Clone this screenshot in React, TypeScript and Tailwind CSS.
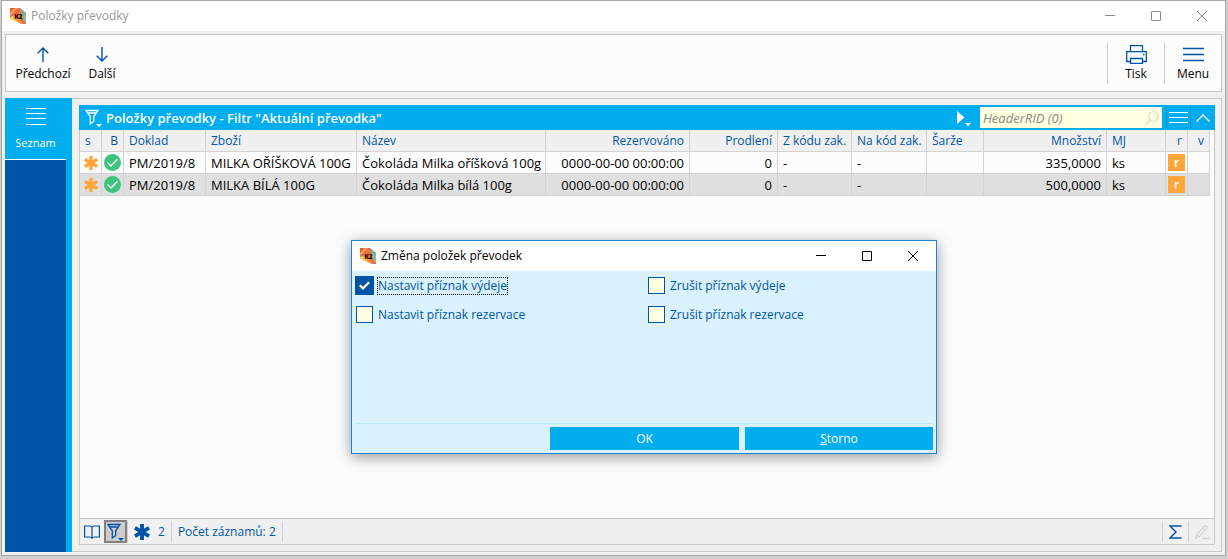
import { useState } from "react"
import type { ReactNode } from "react"
import clsx from "clsx"

type Column = {
  key: string
  title: string
  width: string
  align: string
}

const columns: Column[] = [
  { key: "s", title: "s", width: "w-[22px]", align: "text-left" },
  { key: "b", title: "B", width: "w-[22px]", align: "text-right" },
  { key: "doklad", title: "Doklad", width: "w-[82px]", align: "text-left" },
  { key: "zbozi", title: "Zboží", width: "w-[151px]", align: "text-left" },
  { key: "nazev", title: "Název", width: "", align: "text-left" },
  { key: "rezervovano", title: "Rezervováno", width: "w-[144px]", align: "text-right" },
  { key: "prodleni", title: "Prodlení", width: "w-[88px]", align: "text-right" },
  { key: "zKodu", title: "Z kódu zak.", width: "w-[74px]", align: "text-left" },
  { key: "naKod", title: "Na kód zak.", width: "w-[75px]", align: "text-left" },
  { key: "sarze", title: "Šarže", width: "w-[57px]", align: "text-left" },
  { key: "mnozstvi", title: "Množství", width: "w-[123px]", align: "text-right" },
  { key: "mj", title: "MJ", width: "w-[59px]", align: "text-left" },
  { key: "r", title: "r", width: "w-[22px]", align: "text-right" },
  { key: "v", title: "v", width: "w-[22px]", align: "text-right" },
]

const rows: Record<string, string>[] = [
  {
    doklad: "PM/2019/8",
    zbozi: "MILKA OŘÍŠKOVÁ 100G",
    nazev: "Čokoláda Milka oříšková 100g",
    rezervovano: "0000-00-00 00:00:00",
    prodleni: "0",
    zKodu: "-",
    naKod: "-",
    mnozstvi: "335,0000",
    mj: "ks",
  },
  {
    doklad: "PM/2019/8",
    zbozi: "MILKA BÍLÁ 100G",
    nazev: "Čokoláda Milka bílá 100g",
    rezervovano: "0000-00-00 00:00:00",
    prodleni: "0",
    zKodu: "-",
    naKod: "-",
    mnozstvi: "500,0000",
    mj: "ks",
  },
]

const options = [
  { id: "set-issue", label: "Nastavit příznak výdeje" },
  { id: "clear-issue", label: "Zrušit příznak výdeje" },
  { id: "set-reservation", label: "Nastavit příznak rezervace" },
  { id: "clear-reservation", label: "Zrušit příznak rezervace" },
]

function Logo({ id }: { id: string }) {
  return (
    <svg className="size-4 shrink-0" viewBox="0 0 16 16" aria-hidden="true">
      <clipPath id={id}>
        <path d="M0 0H10L16 5V16H12L0 10.500Z" />
      </clipPath>
      <g clipPath={`url(#${id})`}>
        <rect width="16" height="16" fill="#f0824a" />
        <path d="M0 0H5L0 5Z" fill="#f0583c" />
        <path d="M5 0H8L0 8V5Z" fill="#f9a75a" />
        <path d="M8 0H10L12 2L1 11L0 8Z" fill="#f26a48" />
        <path d="M10 0L16 5V8L10 3Z" fill="#6fb096" />
        <path d="M11 4L16 8V16H15L11 9Z" fill="#8fb98f" />
        <path d="M9 3L11 4L12 10L16 16H12L7 9Z" fill="#ee6a42" />
        <path d="M0 9L3 8L9 15L0 11Z" fill="#f5cf4c" />
        <path d="M3 8H6L13 16H10Z" fill="#f39a45" />
      </g>
      <text x="8.500" y="10.500" textAnchor="middle" fontSize="6.500" fontWeight="800" fill="#1c1410">K2</text>
    </svg>
  )
}

function WindowControls({ className }: { className: string }) {
  return (
    <div className={clsx("flex h-full", className)}>
      <button aria-label="Minimalizovat" className="flex w-[46px] items-center justify-center">
        <svg className="size-[10px]" viewBox="0 0 10 10" stroke="currentColor"><path d="M0 4.500H10" /></svg>
      </button>
      <button aria-label="Maximalizovat" className="flex w-[46px] items-center justify-center">
        <svg className="size-[10px]" viewBox="0 0 10 10" fill="none" stroke="currentColor"><path d="M.5 .5H9.500V9.500H.5Z" /></svg>
      </button>
      <button aria-label="Zavřít" className="flex w-[46px] items-center justify-center">
        <svg className="size-[10px]" viewBox="0 0 10 10" stroke="currentColor"><path d="M0 0L10 10M10 0L0 10" /></svg>
      </button>
    </div>
  )
}

function ToolButton({ label, children }: { label: string; children: ReactNode }) {
  return (
    <button className="flex h-full w-14 flex-col items-center justify-center gap-[2px] text-xs/4 text-black">
      <span className="flex h-5 items-center">{children}</span>
      {label}
    </button>
  )
}

function FilterIcon({ className }: { className?: string }) {
  return (
    <svg className={clsx("h-[18px] w-[17px]", className)} viewBox="0 0 17 18" fill="none" stroke="currentColor" strokeWidth="1.300">
      <path d="M1 1.500H13L8.700 7.800V12.500L5.300 15V7.800ZM3 4H11" />
      <path d="M11 15H17L14 18Z" fill="currentColor" stroke="none" />
    </svg>
  )
}

function Asterisk({ className }: { className: string }) {
  return (
    <svg className={className} viewBox="0 0 14 14" stroke="currentColor" strokeWidth="3.400">
      <path d="M7 0V14M.8 3.400L13.200 10.600M.8 10.600L13.200 3.400" />
    </svg>
  )
}

function Cell({ column, row }: { column: Column; row: Record<string, string> }) {
  if (column.key === "s") {
    return <Asterisk className="mx-auto size-[14px] text-[#ffa63b]" />
  }
  if (column.key === "b") {
    return (
      <svg className="mx-auto size-[17px]" viewBox="0 0 17 17" fill="none">
        <circle cx="8.500" cy="8.500" r="8.500" fill="#3dc47e" />
        <path d="M3.500 8.500L7 12L13.500 5.200" stroke="white" strokeWidth="1.300" />
      </svg>
    )
  }
  if (column.key === "r") {
    return (
      <span className="mx-auto flex size-[17px] items-center justify-center bg-[#ffa63b] text-xs/4 font-semibold text-white">r</span>
    )
  }
  return <>{row[column.key]}</>
}

function ItemsTable() {
  return (
    <div className="flex-1 pr-[4px]">
      <table className="w-full table-fixed border-separate border-spacing-0">
        <thead>
          <tr className="h-[22px] bg-[#f0f0f0] text-xs/4 text-[#0054a6]">
            {columns.map((column) => (
              <th
                key={column.key}
                scope="col"
                className={clsx(
                  "overflow-hidden border-r border-b border-[#d2d2d2] px-[5px] py-0 font-normal whitespace-nowrap",
                  column.width,
                  column.align,
                )}
              >
                {column.title}
              </th>
            ))}
          </tr>
        </thead>
        <tbody>
          {rows.map((row, index) => (
            <tr key={index} className={clsx("h-[22px] text-[13px]/4 text-black", index === 1 && "bg-[#dfdfdf]")}>
              {columns.map((column) => (
                <td
                  key={column.key}
                  className={clsx(
                    "overflow-hidden border-r border-b border-[#d2d2d2] py-0 whitespace-nowrap",
                    column.width === "w-[22px]" ? "px-0" : "px-[5px]",
                    column.align,
                  )}
                >
                  <Cell column={column} row={row} />
                </td>
              ))}
            </tr>
          ))}
        </tbody>
      </table>
    </div>
  )
}

function ChangeDialog() {
  const [checked, setChecked] = useState<string[]>(["set-issue"])

  const toggle = (id: string) =>
    setChecked((prev) => (prev.includes(id) ? prev.filter((item) => item !== id) : [...prev, id]))

  return (
    <div
      role="dialog"
      aria-labelledby="dialog-title"
      className="absolute top-[240px] left-[351px] flex h-[214px] w-[586px] flex-col border border-[#1883d7] bg-[#d9f2fe] shadow-[0_3px_14px_rgba(0,0,0,0.4)]"
    >
      <div className="flex h-[30px] shrink-0 items-center bg-white pl-2">
        <Logo id="logo-dialog" />
        <h2 id="dialog-title" className="ml-[5px] flex-1 text-xs/4 text-black">Změna položek převodek</h2>
        <WindowControls className="text-black" />
      </div>
      <div className="grid flex-1 auto-rows-[29px] grid-cols-2 gap-x-[6px] px-[3px]">
        {options.map((option) => {
          const on = checked.includes(option.id)
          return (
            <div key={option.id} className="flex items-center gap-[3px] text-xs/4 text-[#0054a6]">
              <span className="relative flex size-[19px] items-center justify-center">
                <input
                  id={option.id}
                  type="checkbox"
                  checked={on}
                  onChange={() => toggle(option.id)}
                  className="size-[17px] appearance-none border border-[#0054a6] bg-[#ffffe1] checked:size-[19px] checked:bg-[#0054a6]"
                />
                {on && (
                  <svg className="pointer-events-none absolute size-[11px]" viewBox="0 0 11 11" fill="none">
                    <path d="M.8 5.200L4 8.400L10.200 2.200" stroke="#ffffe1" strokeWidth="2.200" />
                  </svg>
                )}
              </span>
              <label
                htmlFor={option.id}
                className={clsx("border border-dotted", on ? "border-black" : "border-transparent")}
              >
                {option.label}
              </label>
            </div>
          )
        })}
      </div>
      <div className="mx-[3px] flex justify-end gap-[6px] border-t border-[#bfe9fd] py-[3px] text-xs/4 text-white">
        <button className="h-[23px] w-[189px] bg-[#00adef]">OK</button>
        <button className="h-[23px] w-[188px] bg-[#00adef]"><span className="underline">S</span>torno</button>
      </div>
    </div>
  )
}

export default function App() {
  return (
    <div className="relative flex min-h-screen flex-col bg-[#cfcfcf] pr-[2px] pb-[3px] pl-px font-['Open_Sans','Noto_Sans',sans-serif]">
      <main className="flex flex-1 flex-col border border-[#a6a6a6] bg-[#f0f0f0]">
        <header className="flex h-[30px] items-center bg-white pl-2">
          <Logo id="logo-main" />
          <h1 className="ml-[5px] flex-1 text-xs/4 text-[#999999]">Položky převodky</h1>
          <WindowControls className="text-[#8a8a8a]" />
        </header>

        <nav className="mx-[3px] mt-[3px] flex h-[58px] items-center border border-[#c8c8c8] bg-[#fcfcfc] pl-[9px]">
          <div className="flex gap-[3px]">
            <ToolButton label="Předchozí">
              <svg className="h-[15px] w-3 text-[#0054a6]" viewBox="0 0 12 15" fill="none" stroke="currentColor" strokeWidth="1.400">
                <path d="M6 15V1M.7 6.300L6 1L11.300 6.300" />
              </svg>
            </ToolButton>
            <ToolButton label="Další">
              <svg className="h-[15px] w-3 text-[#0054a6]" viewBox="0 0 12 15" fill="none" stroke="currentColor" strokeWidth="1.400">
                <path d="M6 0V14M.7 8.700L6 14L11.300 8.700" />
              </svg>
            </ToolButton>
          </div>
          <div className="ml-auto flex h-[42px] border-l border-[#cfcfcf]">
            <ToolButton label="Tisk">
              <svg className="h-[19px] w-[21px] text-[#0054a6]" viewBox="0 0 21 19" fill="none" stroke="currentColor" strokeWidth="1.300">
                <path d="M4.500 6.500V.7H16.500V6.500M4.500 16.500H.7V6.700H20.300V16.500H16.500M4.500 13.500H16.500V18.300H4.500ZM17 9.500H18.500" />
              </svg>
            </ToolButton>
          </div>
          <div className="flex h-[42px] border-l border-[#cfcfcf]">
            <ToolButton label="Menu">
              <svg className="h-[15px] w-[21px] text-[#0054a6]" viewBox="0 0 21 15" stroke="currentColor" strokeWidth="1.400">
                <path d="M0 1.500H21M0 7.500H21M0 13.500H21" />
              </svg>
            </ToolButton>
          </div>
        </nav>

        <div className="mx-[3px] mt-[6px] mb-[3px] flex flex-1">
          <aside className="flex w-[67px] flex-col bg-[#00adef]">
            <button className="flex h-[61px] flex-col items-center gap-[10px] pt-[10px] pr-[6px] text-[11px]/4 text-white">
              <svg className="h-[17px] w-5" viewBox="0 0 20 17" stroke="currentColor">
                <path d="M0 .5H20M0 5.500H20M0 10.500H20M0 16.500H20" />
              </svg>
              Seznam
            </button>
            <div className="mr-[6px] flex-1 border-t border-white bg-[#0054a6]" />
          </aside>

          <div className="flex flex-1 border-y border-r border-[#c8c8c8] px-[6px] py-[6px] pl-[7px]">
            <section className="flex flex-1 flex-col border-x border-b border-[#c8c8c8] bg-[#fcfcfc]">
              <div className="-mx-px flex h-[25px] items-center bg-[#00adef] pl-[6px] text-white">
                <FilterIcon />
                <h2 className="ml-1 flex-1 text-[13px]/4 font-semibold">Položky převodky - Filtr "Aktuální převodka"</h2>
                <button aria-label="Spustit" className="mr-[9px]">
                  <svg className="h-4 w-[15px]" viewBox="0 0 15 16" fill="currentColor">
                    <path d="M1 1L8.500 7.500L1 14ZM9 13H15L12 16Z" />
                  </svg>
                </button>
                <div className="flex h-[21px] w-[182px] items-center bg-[#ffffe1] pr-[3px] pl-[3px]">
                  <input
                    aria-label="HeaderRID"
                    placeholder="HeaderRID (0)"
                    className="min-w-0 flex-1 text-[13px]/4 text-[#777777] italic outline-none placeholder:text-[#8a8a80]"
                  />
                  <svg className="size-[14px] text-[#dcdcc4]" viewBox="0 0 14 14" fill="none" stroke="currentColor" strokeWidth="1.200">
                    <circle cx="8.500" cy="5.500" r="4.800" />
                    <path d="M5 9L.5 13.500" />
                  </svg>
                </div>
                <button aria-label="Nabídka" className="ml-1 flex h-[21px] w-[25px] items-center justify-center border-x border-[#0095d0]">
                  <svg className="h-[13px] w-[19px]" viewBox="0 0 19 13" stroke="currentColor" strokeWidth="1.200">
                    <path d="M0 1.500H19M0 6.500H19M0 11.500H19" />
                  </svg>
                </button>
                <button aria-label="Sbalit" className="flex w-6 justify-center">
                  <svg className="h-2 w-[14px]" viewBox="0 0 14 8" fill="none" stroke="currentColor" strokeWidth="1.400">
                    <path d="M.5 7.500L7 1L13.500 7.500" />
                  </svg>
                </button>
              </div>

              <ItemsTable />

              <footer className="flex h-[26px] items-center border-t border-[#c8c8c8] bg-[#f0f0f0] pl-1 text-xs/4 text-[#0054a6]">
                <button aria-label="Kniha">
                  <svg className="h-[14px] w-4" viewBox="0 0 16 14" fill="none" stroke="currentColor" strokeWidth="1.200">
                    <path d="M8 2.200Q7 1 5 1H.6V12H5.500Q7.500 12 8 13.300Q8.500 12 10.500 12H15.400V1H11Q9 1 8 2.200ZM8 2.200V13" />
                  </svg>
                </button>
                <button aria-label="Filtr" className="ml-1 flex h-[23px] w-[23px] items-center justify-center border-2 border-[#808080] bg-[#cccccc]">
                  <FilterIcon />
                </button>
                <div className="flex h-[21px] items-center gap-2 border-x border-[#cfcfcf] px-[6px]">
                  <Asterisk className="size-4" />
                  <span>2</span>
                </div>
                <div className="flex h-[21px] items-center border-r border-[#cfcfcf] px-[6px]">Počet záznamů: 2</div>
                <button aria-label="Součet" className="ml-auto flex h-[21px] w-[27px] items-center justify-center border-x border-[#cfcfcf]">
                  <svg className="h-[14px] w-[13px]" viewBox="0 0 13 14" fill="none" stroke="currentColor" strokeWidth="1.400">
                    <path d="M12.500 1H1L7 7L1 13H12.500" />
                  </svg>
                </button>
                <button aria-label="Upravit" disabled className="flex w-[25px] justify-center text-[#d2d2d2]">
                  <svg className="size-[14px]" viewBox="0 0 14 14" fill="none" stroke="currentColor" strokeWidth="1.200">
                    <path d="M.7 13L1.700 9.500L9.500 1.300Q10.500 .4 11.700 1.500Q12.700 2.700 11.800 3.700L4 11.800ZM8 2.800L10.300 5.200M1.700 9.500L4 11.800M7 13.400H14" />
                  </svg>
                </button>
              </footer>
            </section>
          </div>
        </div>
      </main>

      <ChangeDialog />
    </div>
  )
}
